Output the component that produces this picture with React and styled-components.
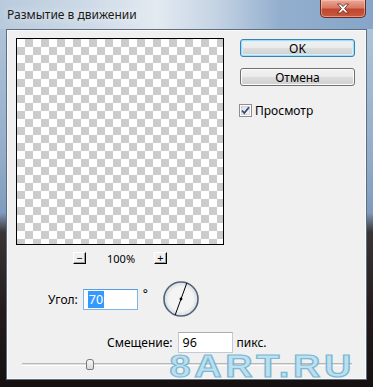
import React from "react";
import styled, { createGlobalStyle } from "styled-components";

const GlobalStyle = createGlobalStyle`
  html, body {
    margin: 0;
    padding: 0;
    overflow: hidden;
    background: #1a1414;
  }
  * { box-sizing: border-box; }
`;

const Window = styled.div`
  width: 373px;
  height: 387px;
  display: flex;
  flex-direction: column;
  font-family: "Noto Sans", "Liberation Sans", sans-serif;
  font-size: 12px;
  color: #000;
  background: linear-gradient(180deg, #b3c8dc 0%, #93adc9 40%, #7f9bbd 55%, #3a3436 60%, #241c1c 80%, #161010 100%);
`;

const TitleBar = styled.div`
  height: 29px;
  display: flex;
  align-items: flex-start;
  padding-left: 7px;
  background: linear-gradient(90deg, #b8cadc 0%, #cfdbe7 25%, #e3eaf1 42%, #c4d3e3 58%, #93afce 75%, #86a5c8 100%);
`;

const Title = styled.div`
  margin-top: 6px;
  font-size: 12px;
  color: #1b1b1b;
  text-shadow: 0 0 8px rgba(255,255,255,0.9);
`;

const CloseButton = styled.div`
  margin-left: auto;
  margin-right: 7px;
  width: 46px;
  height: 18px;
  border: 1px solid #6b2a22;
  border-top: none;
  border-radius: 0 0 5px 5px;
  background: linear-gradient(180deg, #e9a996 0%, #d97a64 45%, #c04630 55%, #c95a3c 100%);
  box-shadow: inset 0 0 0 1px rgba(255,210,200,0.5);
  display: flex;
  align-items: center;
  justify-content: center;
`;

const Client = styled.div`
  flex: 1;
  margin: 0 6px 7px 6px;
  background: #f0f0f0;
  border: 1px solid #5e6e80;
  box-shadow: inset 0 0 0 1px #fafafa;
  position: relative;
  display: flex;
  flex-direction: column;
  overflow: hidden;
`;

const TopSection = styled.div`
  display: flex;
  padding: 8px 0 0 9px;
  gap: 16px;
`;

const PreviewColumn = styled.div`
  display: flex;
  flex-direction: column;
  align-items: center;
`;

const Preview = styled.div`
  width: 208px;
  height: 207px;
  border: 1px solid #000;
  background-color: #fff;
  background-image:
    linear-gradient(45deg, #cccccc 25%, transparent 25%, transparent 75%, #cccccc 75%),
    linear-gradient(45deg, #cccccc 25%, transparent 25%, transparent 75%, #cccccc 75%);
  background-size: 16px 16px;
  background-position: 0 0, 8px 8px;
`;

const ZoomRow = styled.div`
  margin-top: 7px;
  display: flex;
  align-items: center;
  gap: 21px;
  height: 12px;
`;

const ZoomButton = styled.div`
  width: 13px;
  height: 12px;
  background: #f0f0f0;
  border-top: 1px solid #fff;
  border-left: 1px solid #fff;
  border-right: 1px solid #000;
  border-bottom: 1px solid #000;
  box-shadow: inset -1px -1px 0 #a0a0a0;
  font-size: 11px;
  line-height: 9px;
  text-align: center;
`;

const ZoomLabel = styled.div`
  font-size: 11px;
  width: 26px;
  text-align: center;
`;

const SideColumn = styled.div`
  display: flex;
  flex-direction: column;
  padding-top: 1px;
`;

const Button = styled.div`
  width: 115px;
  height: 18px;
  margin-bottom: ${p => p.$gap}px;
  border: 1px solid ${p => (p.$default ? "#3c7fb1" : "#707070")};
  border-radius: 3px;
  background: linear-gradient(180deg, #f2f2f2 0%, #ebebeb 48%, #dddddd 52%, #cfcfcf 100%);
  box-shadow: ${p => (p.$default ? "inset 0 0 0 1px #9fe0f8, inset 0 0 0 2px #d0f0fc" : "inset 0 0 0 1px #fcfcfc")};
  display: flex;
  align-items: center;
  justify-content: center;
  font-size: 12px;
`;

const CheckRow = styled.label`
  display: flex;
  align-items: center;
  gap: 3px;
  margin-left: -1px;
`;

const AngleRow = styled.div`
  margin-top: 17px;
  padding-left: 41px;
  display: flex;
  align-items: center;
  height: 36px;
`;

const OffsetRow = styled.div`
  margin-top: 15px;
  padding-left: 100px;
  display: flex;
  align-items: center;
  height: 21px;
`;

const FieldLabel = styled.span`
  margin-right: 5px;
`;

const Field = styled.div`
  width: 55px;
  height: 21px;
  background: #fff;
  border: 1px solid ${p => (p.$focused ? "#7eb4ea" : "#c5c9d0")};
  border-top-color: ${p => (p.$focused ? "#569de5" : "#abadb3")};
  padding: 2px 0 0 4px;
  font-size: 12.5px;
  line-height: 15px;
`;

const Selected = styled.span`
  background: #3399ff;
  color: #fff;
  padding: 0 1px;
`;

const Unit = styled.span`
  margin-left: ${p => p.$gap}px;
  margin-right: ${p => p.$after || 0}px;
  align-self: ${p => (p.$top ? "flex-start" : "center")};
  margin-top: ${p => (p.$top ? "4px" : 0)};
`;

const SliderRow = styled.div`
  position: relative;
  margin: 3px 0 0 15px;
  width: 330px;
  height: 16px;
`;

const Track = styled.div`
  position: absolute;
  left: 0;
  right: 0;
  top: 7px;
  height: 3px;
  border-top: 1px solid #b8b8b8;
  border-bottom: 1px solid #fff;
  background: #e0e0e0;
`;

const Thumb = styled.div`
  position: absolute;
  left: 64px;
  top: 3px;
  width: 8px;
  height: 11px;
  border: 1px solid #7a7a7a;
  border-radius: 3px 3px 2px 2px;
  background: linear-gradient(180deg, #f8f8f8, #d8d8d8);
`;

const Watermark = styled.div`
  position: absolute;
  right: 11px;
  bottom: 0;
  font-family: "Liberation Sans", "DejaVu Sans", sans-serif;
  font-weight: bold;
  font-size: 31px;
  letter-spacing: 3px;
  line-height: 24px;
  white-space: nowrap;
  color: #b8dfef;
  -webkit-text-stroke: 1.2px #72b4d2;
  transform: scaleX(1.22);
  transform-origin: right bottom;
  opacity: 0.92;
`;

const CloseIcon = () => (
  <svg width="14" height="11" viewBox="0 0 14 11">
    <path
      d="M1.5 1 H4.5 L7 3.6 L9.5 1 H12.5 L8.6 5.5 L12.5 10 H9.5 L7 7.4 L4.5 10 H1.5 L5.4 5.5 Z"
      fill="#fff"
      stroke="#5a2018"
      strokeWidth="0.8"
    />
  </svg>
);

const CheckBox = () => (
  <svg width="13" height="13" viewBox="0 0 13 13">
    <defs>
      <linearGradient id="cbg" x1="0" y1="0" x2="1" y2="1">
        <stop offset="0" stopColor="#dcdcdc" />
        <stop offset="1" stopColor="#fbfbfb" />
      </linearGradient>
    </defs>
    <rect x="0.5" y="0.5" width="12" height="12" fill="#fff" stroke="#8e8f8f" />
    <rect x="2.5" y="2.5" width="8" height="8" fill="url(#cbg)" stroke="#c0c0c0" strokeWidth="0.6" />
    <path d="M3 6.5 L5.3 9 L10 3.2" fill="none" stroke="#324d80" strokeWidth="1.8" />
  </svg>
);

const Dial = ({ angle }) => {
  const r = 17;
  const rad = (angle * Math.PI) / 180;
  const dx = Math.cos(rad) * r;
  const dy = Math.sin(rad) * r;
  return (
    <svg width="38" height="38" viewBox="0 0 38 38">
      <defs>
        <radialGradient id="dialFill" cx="0.5" cy="0.5" r="0.5">
          <stop offset="0.7" stopColor="#f4f4f4" />
          <stop offset="1" stopColor="#d7dbe0" />
        </radialGradient>
      </defs>
      <circle cx="19" cy="19" r={r} fill="url(#dialFill)" stroke="#536377" strokeWidth="1.6" />
      <line x1={19 - dx} y1={19 + dy} x2={19 + dx} y2={19 - dy} stroke="#000" strokeWidth="1" />
      <circle cx="19" cy="19" r="1.4" fill="#000" />
    </svg>
  );
};

export default function App() {
  return (
    <>
      <GlobalStyle />
      <Window>
        <TitleBar>
          <Title>Размытие в движении</Title>
          <CloseButton>
            <CloseIcon />
          </CloseButton>
        </TitleBar>
        <Client>
          <TopSection>
            <PreviewColumn>
              <Preview />
              <ZoomRow>
                <ZoomButton>−</ZoomButton>
                <ZoomLabel>100%</ZoomLabel>
                <ZoomButton>+</ZoomButton>
              </ZoomRow>
            </PreviewColumn>
            <SideColumn>
              <Button $default $gap={11}>OK</Button>
              <Button $gap={16}>Отмена</Button>
              <CheckRow>
                <CheckBox />
                <span>Просмотр</span>
              </CheckRow>
            </SideColumn>
          </TopSection>

          <AngleRow>
            <FieldLabel>Угол:</FieldLabel>
            <Field $focused>
              <Selected>70</Selected>
            </Field>
            <Unit $gap={5} $after={14} $top>°</Unit>
            <Dial angle={70} />
          </AngleRow>

          <OffsetRow>
            <FieldLabel>Смещение:</FieldLabel>
            <Field>96</Field>
            <Unit $gap={4}>пикс.</Unit>
          </OffsetRow>

          <SliderRow>
            <Track />
            <Thumb />
          </SliderRow>

          <Watermark>8ART.RU</Watermark>
        </Client>
      </Window>
    </>
  );
}
